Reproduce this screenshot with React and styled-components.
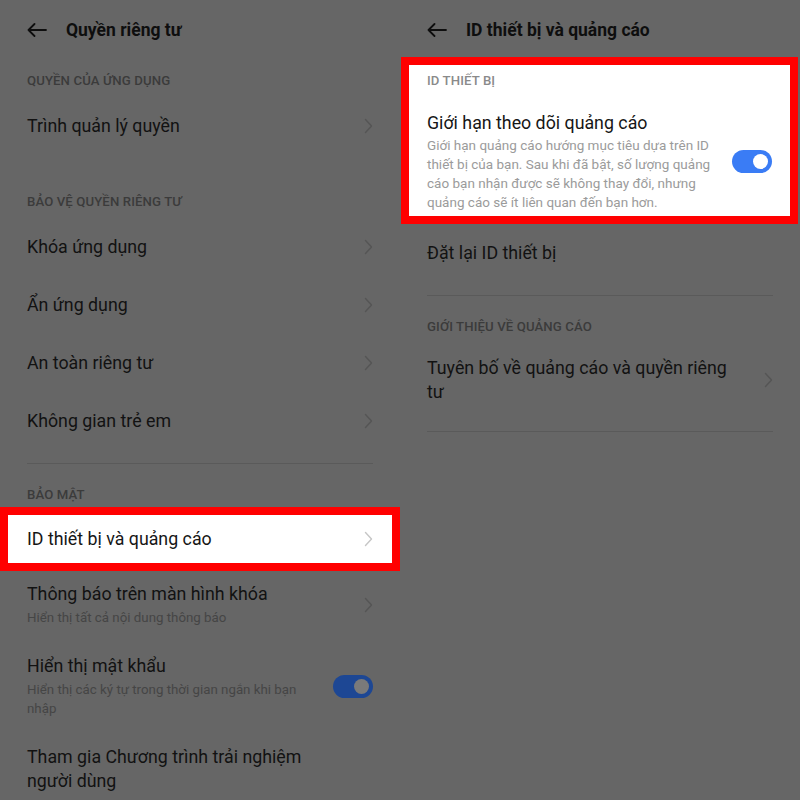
import styled, { createGlobalStyle } from "styled-components";

const GlobalStyle = createGlobalStyle`
  * { box-sizing: border-box; }
  body {
    margin: 0;
    font-family: Roboto, "Noto Sans", "Liberation Sans", sans-serif;
    background: #666666;
  }
`;

const Screen = styled.div`
  width: 800px;
  height: 800px;
  display: grid;
  grid-template-columns: 400px 400px;
  overflow: hidden;
`;

// dim colours live on the panel, the lit card overrides them
const Panel = styled.div`
  --bg: #666666;
  --text: #121212;
  --label: #3b3b3b;
  --sub: #454545;
  --chev: #555555;
  --line: #5a5a5a;
  --toggle: #1d4794;
  --knob: #7a7a7a;
  background: var(--bg);
  height: 800px;
  overflow: hidden;
`;

const Header = styled.div`
  height: 60px;
  display: flex;
  align-items: center;
  gap: 19px;
  padding: 0 27px;
  color: #0e0e0e;
`;

const Title = styled.h1`
  margin: 0;
  font-size: 17.5px;
  font-weight: 700;
`;

const Section = styled.div`
  padding-top: ${(p) => (p.$first ? 3 : 29)}px;
`;

const Divider = styled.div`
  height: 1px;
  margin: 13px 27px;
  background: var(--line);
`;

const Label = styled.div`
  height: ${(p) => p.$h || 34}px;
  display: flex;
  align-items: center;
  padding: 0 ${(p) => p.$x ?? 27}px;
  font-size: 13.2px;
  font-weight: 500;
  letter-spacing: 0.1px;
  color: var(--label);
`;

const Row = styled.div`
  min-height: ${(p) => p.$min ?? 58}px;
  display: flex;
  align-items: center;
  justify-content: space-between;
  gap: 16px;
  padding: ${(p) => p.$pad || "13px 27px 14px"};
  color: var(--text);
`;

const RowText = styled.div`
  flex: 1;
  max-width: 310px;
  display: flex;
  flex-direction: column;
`;

const RowTitle = styled.div`
  font-size: 17.8px;
  line-height: ${(p) => p.$lh || 24}px;
`;

const RowSub = styled.div`
  margin-top: ${(p) => p.$mt ?? 2}px;
  font-size: ${(p) => p.$fs || 13.3}px;
  line-height: 19px;
  color: var(--sub);
`;

const Highlight = styled.div`
  --bg: #ffffff;
  --text: #161616;
  --label: #8a8a8a;
  --sub: #9b9b9b;
  --chev: #c6c6c6;
  --toggle: #3a7cf5;
  --knob: #ffffff;
  background: var(--bg);
  border: 8px solid #ff0000;
  margin: ${(p) => p.$margin || "0"};
`;

const Toggle = styled.div`
  width: 40px;
  height: 23px;
  flex: none;
  border-radius: 12px;
  background: var(--toggle);
  display: flex;
  align-items: center;
  justify-content: flex-end;
  padding-right: 4px;
  &::after {
    content: "";
    width: 15px;
    height: 15px;
    border-radius: 50%;
    background: var(--knob);
  }
`;

const Back = () => (
  <svg width="20" height="14" viewBox="0 0 20 14" fill="none" stroke="currentColor" strokeWidth="1.8" strokeLinecap="round" strokeLinejoin="round">
    <path d="M19 7H1.5M7.5 1L1.5 7l6 6" />
  </svg>
);

const Chevron = () => (
  <svg width="9" height="16" viewBox="0 0 9 16" fill="none" stroke="var(--chev)" strokeWidth="1.4" strokeLinecap="round" strokeLinejoin="round" style={{ flex: "none" }}>
    <path d="M1.5 1.5L7.5 8l-6 6.5" />
  </svg>
);

const Item = ({ title, sub, toggle, chevron = true }) => (
  <Row>
    <RowText>
      <RowTitle>{title}</RowTitle>
      {sub && <RowSub>{sub}</RowSub>}
    </RowText>
    {toggle ? <Toggle /> : chevron && <Chevron />}
  </Row>
);

const LeftScreen = () => (
  <Panel>
    <Header>
      <Back />
      <Title>Quyền riêng tư</Title>
    </Header>
    <Section $first>
      <Label>QUYỀN CỦA ỨNG DỤNG</Label>
      <Item title="Trình quản lý quyền" />
    </Section>
    <Section>
      <Label>BẢO VỆ QUYỀN RIÊNG TƯ</Label>
      <Item title="Khóa ứng dụng" />
      <Item title="Ẩn ứng dụng" />
      <Item title="An toàn riêng tư" />
      <Item title="Không gian trẻ em" />
    </Section>
    <Divider />
    <Label>BẢO MẬT</Label>
    <Highlight $margin="-4px 0 -2px">
      <Row $min={48} $pad="0 19px">
        <RowText>
          <RowTitle>ID thiết bị và quảng cáo</RowTitle>
        </RowText>
        <Chevron />
      </Row>
    </Highlight>
    <Item title="Thông báo trên màn hình khóa" sub="Hiển thị tất cả nội dung thông báo" />
    <Item
      title="Hiển thị mật khẩu"
      sub="Hiển thị các ký tự trong thời gian ngắn khi bạn nhập"
      toggle
    />
    <Item title="Tham gia Chương trình trải nghiệm người dùng" chevron={false} />
  </Panel>
);

const RightScreen = () => (
  <Panel>
    <Header>
      <Back />
      <Title>ID thiết bị và quảng cáo</Title>
    </Header>
    <Highlight $margin="-3px 2px 0 1px">
      <Label $h={30} $x={18}>ID THIẾT BỊ</Label>
      <Row $pad="15px 18px 4px 18px" $min={0}>
        <RowText>
          <RowTitle $lh={26}>Giới hạn theo dõi quảng cáo</RowTitle>
          <RowSub $mt={0} $fs={13.5}>
            Giới hạn quảng cáo hướng mục tiêu dựa trên ID thiết bị của bạn. Sau khi đã bật, số lượng quảng cáo bạn nhận được sẽ không thay đổi, nhưng quảng cáo sẽ ít liên quan đến bạn hơn.
          </RowSub>
        </RowText>
        <Toggle />
      </Row>
    </Highlight>
    <Item title="Đặt lại ID thiết bị" chevron={false} />
    <Divider />
    <Label>GIỚI THIỆU VỀ QUẢNG CÁO</Label>
    <Item title="Tuyên bố về quảng cáo và quyền riêng tư" />
    <Divider />
  </Panel>
);

export default function App() {
  return (
    <>
      <GlobalStyle />
      <Screen>
        <LeftScreen />
        <RightScreen />
      </Screen>
    </>
  );
}
